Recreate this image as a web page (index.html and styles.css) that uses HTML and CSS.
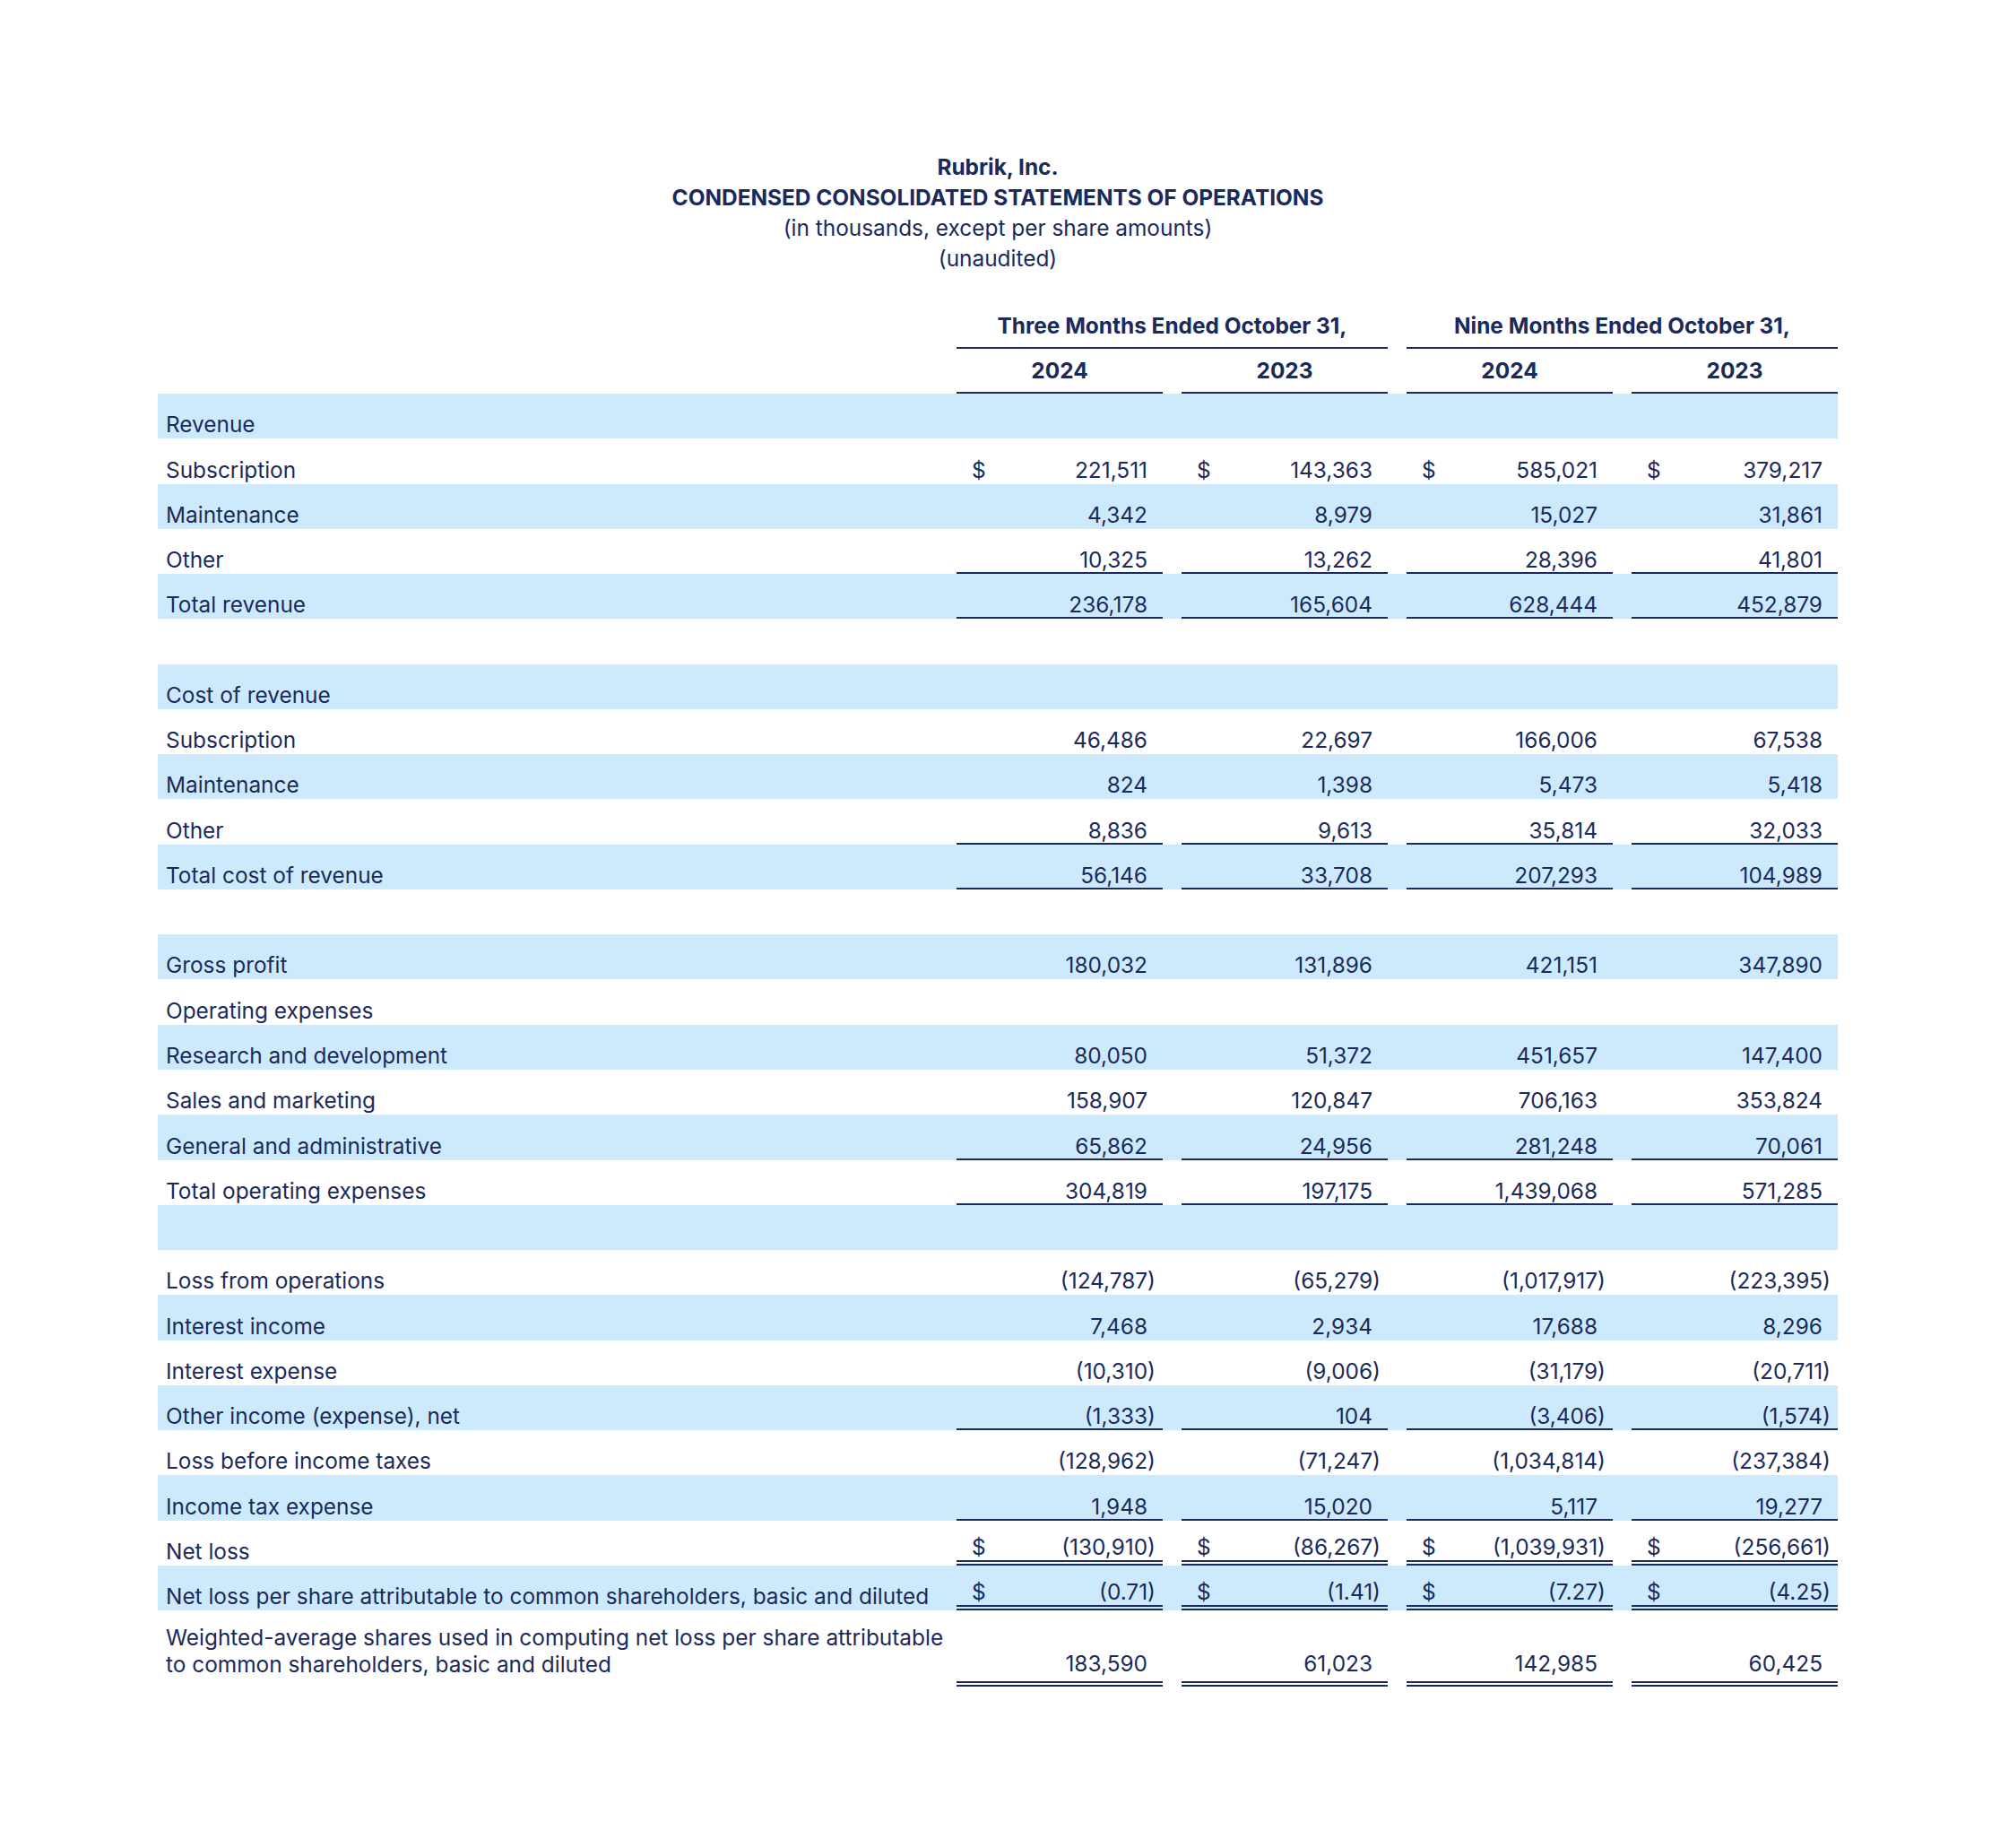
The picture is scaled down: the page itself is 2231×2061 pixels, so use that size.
FILE: index.html
```html
<!DOCTYPE html>
<html>
<head>
<meta charset="utf-8">
<link rel="stylesheet" href="styles.css">
</head>
<body>
<div class="page">
  <div class="title">
    <div class="t-bold">Rubrik, Inc.</div>
    <div class="t-bold">CONDENSED CONSOLIDATED STATEMENTS OF OPERATIONS</div>
    <div>(in thousands, except per share amounts)</div>
    <div>(unaudited)</div>
  </div>

  <div class="table">
    <div class="hrow">
      <div class="grp g1">Three Months Ended October 31,</div>
      <div class="grp g2">Nine Months Ended October 31,</div>
    </div>
    <div class="hrow">
      <div class="yr y1">2024</div>
      <div class="yr">2023</div>
      <div class="yr">2024</div>
      <div class="yr">2023</div>
    </div>

    <div class="row"><div class="lbl">Revenue</div></div>
    <div class="row"><div class="lbl">Subscription</div>
      <div class="d"><span class="cur">$</span><span class="n">221,511</span></div>
      <div class="d"><span class="cur">$</span><span class="n">143,363</span></div>
      <div class="d"><span class="cur">$</span><span class="n">585,021</span></div>
      <div class="d"><span class="cur">$</span><span class="n">379,217</span></div>
    </div>
    <div class="row"><div class="lbl">Maintenance</div>
      <div class="d"><span class="n">4,342</span></div>
      <div class="d"><span class="n">8,979</span></div>
      <div class="d"><span class="n">15,027</span></div>
      <div class="d"><span class="n">31,861</span></div>
    </div>
    <div class="row"><div class="lbl">Other</div>
      <div class="d u1"><span class="n">10,325</span></div>
      <div class="d u1"><span class="n">13,262</span></div>
      <div class="d u1"><span class="n">28,396</span></div>
      <div class="d u1"><span class="n">41,801</span></div>
    </div>
    <div class="row"><div class="lbl">Total revenue</div>
      <div class="d u1"><span class="n">236,178</span></div>
      <div class="d u1"><span class="n">165,604</span></div>
      <div class="d u1"><span class="n">628,444</span></div>
      <div class="d u1"><span class="n">452,879</span></div>
    </div>
    <div class="row"><div class="lbl"></div></div>
    <div class="row"><div class="lbl">Cost of revenue</div></div>
    <div class="row"><div class="lbl">Subscription</div>
      <div class="d"><span class="n">46,486</span></div>
      <div class="d"><span class="n">22,697</span></div>
      <div class="d"><span class="n">166,006</span></div>
      <div class="d"><span class="n">67,538</span></div>
    </div>
    <div class="row"><div class="lbl">Maintenance</div>
      <div class="d"><span class="n">824</span></div>
      <div class="d"><span class="n">1,398</span></div>
      <div class="d"><span class="n">5,473</span></div>
      <div class="d"><span class="n">5,418</span></div>
    </div>
    <div class="row"><div class="lbl">Other</div>
      <div class="d u1"><span class="n">8,836</span></div>
      <div class="d u1"><span class="n">9,613</span></div>
      <div class="d u1"><span class="n">35,814</span></div>
      <div class="d u1"><span class="n">32,033</span></div>
    </div>
    <div class="row"><div class="lbl">Total cost of revenue</div>
      <div class="d u1"><span class="n">56,146</span></div>
      <div class="d u1"><span class="n">33,708</span></div>
      <div class="d u1"><span class="n">207,293</span></div>
      <div class="d u1"><span class="n">104,989</span></div>
    </div>
    <div class="row"><div class="lbl"></div></div>
    <div class="row"><div class="lbl">Gross profit</div>
      <div class="d"><span class="n">180,032</span></div>
      <div class="d"><span class="n">131,896</span></div>
      <div class="d"><span class="n">421,151</span></div>
      <div class="d"><span class="n">347,890</span></div>
    </div>
    <div class="row"><div class="lbl">Operating expenses</div></div>
    <div class="row"><div class="lbl">Research and development</div>
      <div class="d"><span class="n">80,050</span></div>
      <div class="d"><span class="n">51,372</span></div>
      <div class="d"><span class="n">451,657</span></div>
      <div class="d"><span class="n">147,400</span></div>
    </div>
    <div class="row"><div class="lbl">Sales and marketing</div>
      <div class="d"><span class="n">158,907</span></div>
      <div class="d"><span class="n">120,847</span></div>
      <div class="d"><span class="n">706,163</span></div>
      <div class="d"><span class="n">353,824</span></div>
    </div>
    <div class="row"><div class="lbl">General and administrative</div>
      <div class="d u1"><span class="n">65,862</span></div>
      <div class="d u1"><span class="n">24,956</span></div>
      <div class="d u1"><span class="n">281,248</span></div>
      <div class="d u1"><span class="n">70,061</span></div>
    </div>
    <div class="row"><div class="lbl">Total operating expenses</div>
      <div class="d u1"><span class="n">304,819</span></div>
      <div class="d u1"><span class="n">197,175</span></div>
      <div class="d u1"><span class="n">1,439,068</span></div>
      <div class="d u1"><span class="n">571,285</span></div>
    </div>
    <div class="row"><div class="lbl"></div></div>
    <div class="row"><div class="lbl">Loss from operations</div>
      <div class="d"><span class="n">(124,787<span class="p">)</span></span></div>
      <div class="d"><span class="n">(65,279<span class="p">)</span></span></div>
      <div class="d"><span class="n">(1,017,917<span class="p">)</span></span></div>
      <div class="d"><span class="n">(223,395<span class="p">)</span></span></div>
    </div>
    <div class="row"><div class="lbl">Interest income</div>
      <div class="d"><span class="n">7,468</span></div>
      <div class="d"><span class="n">2,934</span></div>
      <div class="d"><span class="n">17,688</span></div>
      <div class="d"><span class="n">8,296</span></div>
    </div>
    <div class="row"><div class="lbl">Interest expense</div>
      <div class="d"><span class="n">(10,310<span class="p">)</span></span></div>
      <div class="d"><span class="n">(9,006<span class="p">)</span></span></div>
      <div class="d"><span class="n">(31,179<span class="p">)</span></span></div>
      <div class="d"><span class="n">(20,711<span class="p">)</span></span></div>
    </div>
    <div class="row"><div class="lbl">Other income (expense), net</div>
      <div class="d u1"><span class="n">(1,333<span class="p">)</span></span></div>
      <div class="d u1"><span class="n">104</span></div>
      <div class="d u1"><span class="n">(3,406<span class="p">)</span></span></div>
      <div class="d u1"><span class="n">(1,574<span class="p">)</span></span></div>
    </div>
    <div class="row"><div class="lbl">Loss before income taxes</div>
      <div class="d"><span class="n">(128,962<span class="p">)</span></span></div>
      <div class="d"><span class="n">(71,247<span class="p">)</span></span></div>
      <div class="d"><span class="n">(1,034,814<span class="p">)</span></span></div>
      <div class="d"><span class="n">(237,384<span class="p">)</span></span></div>
    </div>
    <div class="row"><div class="lbl">Income tax expense</div>
      <div class="d u1"><span class="n">1,948</span></div>
      <div class="d u1"><span class="n">15,020</span></div>
      <div class="d u1"><span class="n">5,117</span></div>
      <div class="d u1"><span class="n">19,277</span></div>
    </div>
    <div class="row"><div class="lbl">Net loss</div>
      <div class="d u2"><span class="cur">$</span><span class="n">(130,910<span class="p">)</span></span></div>
      <div class="d u2"><span class="cur">$</span><span class="n">(86,267<span class="p">)</span></span></div>
      <div class="d u2"><span class="cur">$</span><span class="n">(1,039,931<span class="p">)</span></span></div>
      <div class="d u2"><span class="cur">$</span><span class="n">(256,661<span class="p">)</span></span></div>
    </div>
    <div class="row"><div class="lbl">Net loss per share attributable to common shareholders, basic and diluted</div>
      <div class="d u2"><span class="cur">$</span><span class="n">(0.71<span class="p">)</span></span></div>
      <div class="d u2"><span class="cur">$</span><span class="n">(1.41<span class="p">)</span></span></div>
      <div class="d u2"><span class="cur">$</span><span class="n">(7.27<span class="p">)</span></span></div>
      <div class="d u2"><span class="cur">$</span><span class="n">(4.25<span class="p">)</span></span></div>
    </div>
    <div class="row tall"><div class="lbl">Weighted-average shares used in computing net loss per share attributable to common shareholders, basic and diluted</div>
      <div class="d u2"><span class="n">183,590</span></div>
      <div class="d u2"><span class="n">61,023</span></div>
      <div class="d u2"><span class="n">142,985</span></div>
      <div class="d u2"><span class="n">60,425</span></div>
    </div>
  </div>
</div>
</body>
</html>
```

FILE: styles.css
```css
html, body {
  margin: 0;
  padding: 0;
  background: #ffffff;
}
body {
  font-family: Inter, "Noto Sans", sans-serif;
  font-size: 24.4px;
  color: #1a2a5a;
}
.page {
  width: 1874px;
  padding: 169px 0 120px 176px;
}
.title {
  text-align: center;
  line-height: 34px;
}
.t-bold {
  font-weight: 700;
}
.table {
  margin-top: 34px;
}
.hrow, .row {
  display: grid;
  grid-template-columns: 891px 230px 251px 251px 251px;
  line-height: 28px;
}
.hrow {
  height: 50px;
  font-weight: 700;
}
.grp, .yr {
  display: flex;
  align-items: flex-end;
  justify-content: center;
  padding-bottom: 10px;
  border-bottom: 2px solid #1a2a5a;
}
.g1 {
  grid-column: 2 / 4;
}
.g2 {
  grid-column: 4 / 6;
  margin-left: 21px;
}
.y1 {
  grid-column: 2;
}
.yr + .yr {
  margin-left: 21px;
}
.row {
  height: 50.27px;
}
.row:nth-of-type(odd) {
  background: #cdeafd;
}
.lbl {
  display: flex;
  align-items: flex-end;
  padding: 0 0 2px 9px;
}
.d {
  display: flex;
  align-items: flex-end;
  padding: 0 17px 2px 17px;
}
.d + .d {
  margin-left: 21px;
}
.n {
  margin-left: auto;
}
.p {
  margin-right: -9px;
}
.u1 {
  background: linear-gradient(#1a2a5a, #1a2a5a) left bottom / 100% 2px no-repeat;
}
.u2 {
  padding-bottom: 7px;
  background:
    linear-gradient(#1a2a5a, #1a2a5a) left bottom / 100% 2px no-repeat,
    linear-gradient(#1a2a5a, #1a2a5a) left calc(100% - 4px) / 100% 2px no-repeat;
}
.row.tall {
  height: auto;
  padding-top: 15px;
  line-height: 30px;
}
.row.tall .lbl {
  padding-bottom: 10px;
}
.row.tall .d {
  padding-bottom: 11px;
}
```
